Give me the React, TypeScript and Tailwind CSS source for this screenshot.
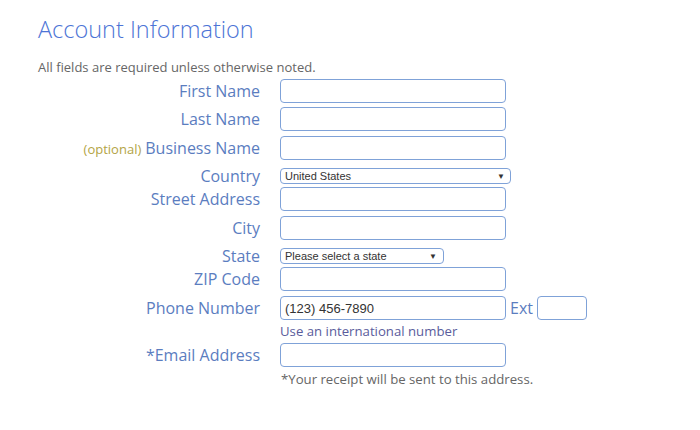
import React from 'react'

const label = 'w-[222px] shrink-0 text-right text-[16px] text-[#5b7dbf] leading-[20px]'
const input = 'h-[24px] w-[226px] rounded-[4px] border border-[#7fa2d8] bg-white px-[4px] text-[13px] text-[#333] outline-none'
const select = 'h-[16px] appearance-none rounded-[4px] border border-[#7fa2d8] bg-white pl-[4px] text-[11px] leading-[14px] text-[#333] outline-none'

function Arrow({ right }: { right: string }) {
  return (
    <span className={`pointer-events-none absolute inset-y-0 ${right} flex items-center text-[8px] leading-none text-[#333]`}>
      ▼
    </span>
  )
}

export default function App() {
  return (
    <div className="h-[430px] w-[700px] bg-white pl-[38px] pt-[12px]" style={{ fontFamily: '"Open Sans", "Liberation Sans", sans-serif' }}>
      <h1 className="h-[34px] text-[23.5px] font-light leading-[34px] text-[#4d74d6]">Account Information</h1>

      <p className="mt-[13px] text-[13px] leading-[16px] text-[#666]">All fields are required unless otherwise noted.</p>

      <div className="mt-[4px] flex flex-col">
        <div className="flex h-[24px] items-center">
          <span className={label}>First Name</span>
          <input className={`ml-[20px] ${input}`} />
        </div>

        <div className="mt-[4px] flex h-[24px] items-center">
          <span className={label}>Last Name</span>
          <input className={`ml-[20px] ${input}`} />
        </div>

        <div className="mt-[5px] flex h-[24px] items-center">
          <span className={label}>
            <span className="mr-[4px] text-[13px] text-[#b3a445]">(optional)</span>Business Name
          </span>
          <input className={`ml-[20px] ${input}`} />
        </div>

        <div className="mt-[8px] flex h-[16px] items-center">
          <span className={label}>Country</span>
          <div className="relative ml-[20px] flex h-[16px] items-center">
            <select className={`w-[231px] ${select}`} style={{ fontFamily: '"Liberation Sans", Arial, sans-serif' }} defaultValue="us">
              <option value="us">United States</option>
            </select>
            <Arrow right="right-[6px]" />
          </div>
        </div>

        <div className="mt-[3px] flex h-[24px] items-center">
          <span className={label}>Street Address</span>
          <input className={`ml-[20px] ${input}`} />
        </div>

        <div className="mt-[5px] flex h-[24px] items-center">
          <span className={label}>City</span>
          <input className={`ml-[20px] ${input}`} />
        </div>

        <div className="mt-[8px] flex h-[16px] items-center">
          <span className={label}>State</span>
          <div className="relative ml-[20px] flex h-[16px] items-center">
            <select className={`w-[164px] ${select}`} style={{ fontFamily: '"Liberation Sans", Arial, sans-serif' }} defaultValue="">
              <option value="">Please select a state</option>
            </select>
            <Arrow right="right-[7px]" />
          </div>
        </div>

        <div className="mt-[3px] flex h-[24px] items-center">
          <span className={label}>ZIP Code</span>
          <input className={`ml-[20px] ${input}`} />
        </div>

        <div className="mt-[5px] flex h-[24px] items-center">
          <span className={label}>Phone Number</span>
          <input
            className={`ml-[20px] ${input}`}
            style={{ fontFamily: '"Liberation Sans", Arial, sans-serif' }}
            defaultValue="(123) 456-7890"
          />
          <span className="ml-[4px] text-[16px] leading-[20px] text-[#5b7dbf]">Ext</span>
          <input className="ml-[4px] h-[24px] w-[50px] rounded-[4px] border border-[#7fa2d8] bg-white outline-none" />
        </div>

        <p className="ml-[242px] mt-[1px] text-[13.2px] leading-[20px] text-[#5a5c9c]">Use an international number</p>

        <div className="mt-[2px] flex h-[24px] items-center">
          <span className={label}>*Email Address</span>
          <input className={`ml-[20px] ${input}`} />
        </div>

        <p className="ml-[243px] mt-[2px] text-[13.2px] leading-[20px] text-[#666]">*Your receipt will be sent to this address.</p>
      </div>
    </div>
  )
}
